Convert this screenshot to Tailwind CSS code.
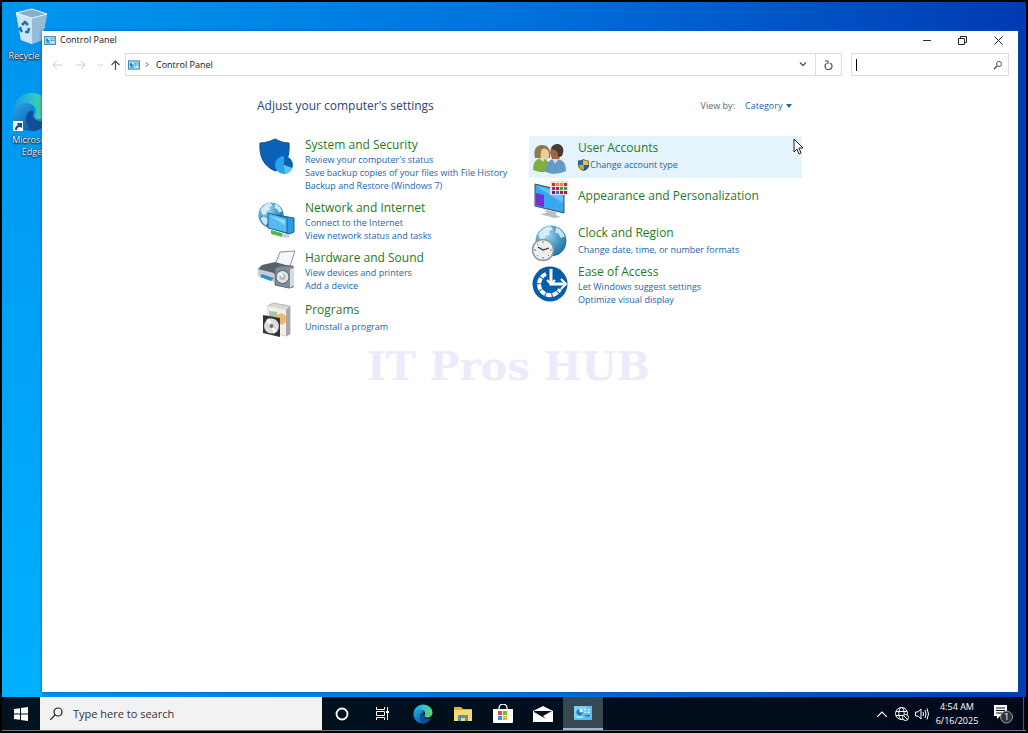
<!DOCTYPE html>
<html lang="en">
<head>
    <meta charset="UTF-8">
    <meta name="viewport" content="width=device-width, initial-scale=1.0">
    <title>Control Panel</title>
    <script src="https://cdn.jsdelivr.net/npm/@tailwindcss/browser@4"></script>
</head>
<body class="h-screen overflow-hidden bg-black px-[2px] pt-[2px] pb-[2px] flex flex-col font-['Open_Sans',sans-serif] text-[9px] text-[#111]">
    <!-- Shared icons -->
    <svg class="absolute w-0 h-0" aria-hidden="true">
        <symbol id="panelIcon" viewBox="0 0 26 20">
            <rect x="1" y="1" width="24" height="18" fill="#9fdcf5" stroke="#3787b0" stroke-width="2"/>
            <circle cx="8" cy="9" r="4" fill="#2378ad"/>
            <path d="M8 9V5a4 4 0 0 1 4 4z" fill="#e9fbff"/>
            <path d="M15 6h3M20 6h3M15 10h3M20 10h3M5 15h8" stroke="#2a83b5" stroke-width="2"/>
            <path d="M17 14h5" stroke="#fff" stroke-width="2"/>
        </symbol>
        <symbol id="panelIconLight" viewBox="0 0 26 20">
            <rect width="26" height="20" fill="#7fd0f5"/>
            <path d="M0 20L20 0h6v20z" fill="#5dbdec"/>
            <circle cx="8" cy="9" r="4.500" fill="#1d79b8"/>
            <path d="M8 9V4a5 5 0 0 1 5 5z" fill="#eafaff"/>
            <path d="M15 5h3M20 5h3M15 9h3M20 9h3M4 16h9" stroke="#e6f8ff" stroke-width="2"/>
            <path d="M16 14h7" stroke="#1d79b8" stroke-width="2"/>
        </symbol>
        <symbol id="edgeIcon" viewBox="0 0 40 40">
            <defs>
                <linearGradient id="edgeTop" x1="0" y1="0.4" x2="1" y2="0.5"><stop offset="0" stop-color="#1b9de2"/><stop offset="0.5" stop-color="#2fc3c9"/><stop offset="1" stop-color="#62d957"/></linearGradient>
                <linearGradient id="edgeBody" x1="0" y1="0" x2="0.6" y2="1"><stop offset="0" stop-color="#2aa7e8"/><stop offset="1" stop-color="#0d5fb5"/></linearGradient>
            </defs>
            <path d="M1 19C2 8 10 1 20 1c11 0 19 8 19 16 0 6-5 10-11 10-4 0-6-2-5-4 3-5 0-11-7-11C9 12 3 15 1 19z" fill="url(#edgeTop)"/>
            <path d="M1 19c2-5 7-8 13-8 5 0 8 3 8 6-5 0-8 4-8 9 0 6 4 11 9 13C10 41 0 31 1 19z" fill="url(#edgeBody)"/>
            <path d="M14 26c0-4 3-8 7-8 1 2 0 4 0 6 1 5 9 7 15 4-3 7-9 11-14 11-5-2-8-7-8-13z" fill="#124d95"/>
        </symbol>
        <symbol id="globe" viewBox="0 0 30 30">
            <defs><radialGradient id="sea" cx="0.35" cy="0.3" r="0.8"><stop offset="0" stop-color="#a9d9ee"/><stop offset="0.5" stop-color="#4d9fc9"/><stop offset="1" stop-color="#1d6795"/></radialGradient></defs>
            <circle cx="15" cy="15" r="14.500" fill="url(#sea)"/>
            <path d="M3 9c3-5 7-7 11-8l3 3-4 2 1 3-4 1-1 4-3 1-2-3zM20 2c5 2 7 6 8 9l-4 1-2-4-3-1zM6 17l5 2 1 4-3 4c-3-2-5-5-6-8z" fill="#e2f3fa" fill-opacity="0.850"/>
        </symbol>
    </svg>

    <!-- Desktop -->
    <main class="relative flex-1 min-h-0 flex flex-col pl-10 pr-2 pt-[29px] pb-[5px] bg-linear-to-r from-[#0098f0] via-[#0072dc] to-[#003ab3]">
        <div class="absolute left-0 top-0 w-10 h-full bg-linear-to-b from-[#0094ee] to-[#00b0ff]"></div>
        <div class="absolute left-0 top-[6px] w-15 flex flex-col gap-[30px] text-center text-white leading-3 [text-shadow:0_1px_2px_#000,0_0_1px_#000]">
            <a href="#" class="flex flex-col items-center gap-1">
                <svg class="w-9 h-[38px]" viewBox="0 0 36 38">
                    <path d="M2 5 18 1l15 5-5 26-10 4L7 32z" fill="#b9d9ec"/>
                    <path d="M2 5l16 4v27L7 32z" fill="#cde5f3"/>
                    <path d="M18 9l15-3-5 26-10 4z" fill="#94bdda"/>
                    <path d="M2 5 18 1l15 5-15 4z" fill="#86aec9" stroke="#eaf6fc"/>
                    <path d="M8 17l3-3 3 3M15 20l-1 4h-3M8 24l-2-3 1-2" fill="none" stroke="#1573c4" stroke-width="2.500"/>
                </svg>
                Recycle Bin
            </a>
            <a href="#" class="relative flex flex-col items-center gap-[2px]">
                <svg class="w-10 h-10"><use href="#edgeIcon"/></svg>
                <svg class="absolute left-[11px] top-[29px] w-[10px] h-[10px] bg-white" viewBox="0 0 10 10"><path d="M2 9c0-3 1-4 3-5L4 2h5v5L7 6C5 6 4 7 4 9z" fill="#1c4a8c"/></svg>
                <span>Microsoft<br>Edge</span>
            </a>
        </div>

        <!-- Window -->
        <section class="relative flex-1 bg-white shadow-[0_0_3px_#0a5bb0]">
            <header class="flex items-center h-[18px] px-[2px]">
                <svg class="w-3 h-[9px] mr-1"><use href="#panelIcon"/></svg>
                <h1 class="flex-1">Control Panel</h1>
                <button aria-label="Minimize" class="w-9 flex justify-center"><svg class="w-[9px] h-[9px]" viewBox="0 0 9 9"><path d="M1 4.500h8" stroke="#333"/></svg></button>
                <button aria-label="Restore" class="w-9 flex justify-center"><svg class="w-[9px] h-[9px]" viewBox="0 0 9 9" fill="none" stroke="#222"><path d="M.5 2.500h6v6h-6zM2.500 2.500v-2h6v6h-2"/></svg></button>
                <button aria-label="Close" class="w-9 flex justify-center"><svg class="w-[9px] h-[9px]" viewBox="0 0 9 9"><path d="M.5.500l8 8M8.500.500l-8 8" stroke="#222"/></svg></button>
            </header>

            <nav class="flex items-center h-[23px] mt-1 pl-2 pr-[9px]">
                <button aria-label="Back" class="w-6"><svg class="w-[10px] h-[10px] ml-[2px]" viewBox="0 0 10 10" fill="none" stroke="#ccc"><path d="M10 5H1M5 1L1 5l4 4"/></svg></button>
                <button aria-label="Forward" class="w-6"><svg class="w-[10px] h-[10px] ml-[2px]" viewBox="0 0 10 10" fill="none" stroke="#ccc"><path d="M0 5h9M5 1l4 4-4 4"/></svg></button>
                <button aria-label="Recent locations" class="w-3"><svg class="w-[5px] h-[4px]" viewBox="0 0 5 4" fill="none" stroke="#ccc"><path d="M0 1l2.500 2L5 1"/></svg></button>
                <button aria-label="Up" class="w-[15px]"><svg class="w-[9px] h-[10px] ml-px" viewBox="0 0 9 10" fill="none" stroke="#555" stroke-width="1.300"><path d="M4.500 10V1M.5 5l4-4 4 4"/></svg></button>
                <div class="flex flex-1 items-center h-full border border-[#ddd] pl-[2px]">
                    <svg class="w-3 h-[10px]"><use href="#panelIcon"/></svg>
                    <svg class="w-1 h-[5px] mx-[5px]" viewBox="0 0 4 5" fill="none" stroke="#444"><path d="M1 .5l2 2-2 2"/></svg>
                    <a href="#" class="flex-1 ml-[2px]">Control Panel</a>
                    <button aria-label="Previous locations" class="w-6 flex justify-center"><svg class="w-2 h-[5px]" viewBox="0 0 8 5" fill="none" stroke="#555" stroke-width="1.300"><path d="M1 .5l3 3 3-3"/></svg></button>
                    <button aria-label="Refresh" class="w-[26px] h-full border-l border-[#ddd] flex items-center justify-center"><svg class="w-[9px] h-[10px]" viewBox="0 0 9 10" fill="none" stroke="#555" stroke-width="1.200"><path d="M6 3a3.500 3.500 0 1 1-3.500.3M1 1h3v3"/></svg></button>
                </div>
                <label class="flex items-center w-[158px] h-full ml-[9px] border border-[#ddd] pl-1 pr-[5px]">
                    <span class="w-px h-3 bg-black"></span>
                    <input type="text" aria-label="Search Control Panel" class="flex-1 min-w-0 outline-none">
                    <svg class="w-[10px] h-[10px]" viewBox="0 0 10 10" fill="none" stroke="#555"><circle cx="6" cy="4" r="2.500"/><path d="M4 6L1 9" stroke-width="1.400"/></svg>
                </label>
            </nav>

            <div class="ml-[215px] w-[545px] pt-5">
                <div class="flex items-center justify-between h-5 pr-[10px]">
                    <h2 class="text-[12px] text-[#2a4475]">Adjust your computer's settings</h2>
                    <div class="flex items-center text-[#666]">
                        <label for="viewBy" class="mr-[10px]">View by:</label>
                        <select id="viewBy" class="appearance-none w-[41px] text-[#1a66a8]"><option>Category</option><option>Large icons</option><option>Small icons</option></select>
                        <svg class="w-[6px] h-[4px]" viewBox="0 0 6 4"><path d="M0 0h6L3 4z" fill="#1a66a8"/></svg>
                    </div>
                </div>

                <div class="flex pt-5 leading-[13px] text-[#1a66a8]">
                    <!-- Left column -->
                    <div class="w-[272px] flex flex-col gap-2 pt-px">
                        <div class="flex gap-[10px]">
                            <svg class="w-[38px] h-10" viewBox="0 0 38 40">
                                <path d="M3 6c6 0 11-2 15-4 4 2 8 4 14 4 1 14-3 23-14 28C7 29 2 20 3 6z" fill="#0b62b8" stroke="#084c96"/>
                                <circle cx="27" cy="28" r="9" fill="#27a4ec"/>
                                <path d="M27 28V19a9 9 0 0 1 8 12z" fill="#0b5fae"/><path d="M27 28l8 3a9 9 0 0 1-7 6z" fill="#5cc3f6"/>
                            </svg>
                            <div class="flex flex-col items-start">
                                <a href="#" class="text-[12px] leading-4 text-[#1e7a1e]">System and Security</a>
                                <a href="#">Review your computer's status</a>
                                <a href="#">Save backup copies of your files with File History</a>
                                <a href="#">Backup and Restore (Windows 7)</a>
                            </div>
                        </div>
                        <div class="flex gap-[10px]">
                            <svg class="w-[38px] h-10" viewBox="0 0 38 40">
                                <use href="#globe" x="1" y="1" width="26" height="28"/>
                                <path d="M20 15l17 3v14l-5 2-12-4z" fill="#2b9be6" stroke="#1a5f93"/>
                                <path d="M11 13l19 5v15l-19-5z" fill="#56b9f3" stroke="#1c648f"/>
                                <path d="M13 16l15 4v5z" fill="#8dd7fb"/>
                                <path d="M14 30l11 3v4l-11-3z" fill="#3fbf4f"/><path d="M25 33l7 2v3l-7-1z" fill="#c7cdd0"/>
                            </svg>
                            <div class="flex flex-col items-start">
                                <a href="#" class="text-[12px] leading-4 text-[#1e7a1e]">Network and Internet</a>
                                <a href="#">Connect to the Internet</a>
                                <a href="#">View network status and tasks</a>
                            </div>
                        </div>
                        <div class="flex gap-[10px]">
                            <svg class="w-[38px] h-10" viewBox="0 0 38 40">
                                <path d="M23 2l15-1-5 15-15-1z" fill="#f4f6f8" stroke="#8d949b"/>
                                <path d="M5 15l13-3 18 5v7H1v-5z" fill="#59616a"/>
                                <path d="M1 19l16 4v9L1 26z" fill="#c5cdd5"/><path d="M5 24l12 4-3 3-11-4z" fill="#2d91cf"/>
                                <path d="M18 18l5-2h13v21l-4 1-14-3z" fill="#838d98" stroke="#5c6670"/>
                                <path d="M33 19l4-1v17l-4 3z" fill="#d5dbe1"/>
                                <circle cx="25.500" cy="27" r="6.500" fill="#dde2e6" stroke="#59636d"/><circle cx="25.500" cy="27" r="3" fill="#b1b9c1"/><path d="M23 23l3 4" stroke="#fff" stroke-width="2"/>
                            </svg>
                            <div class="flex flex-col items-start">
                                <a href="#" class="text-[12px] leading-4 text-[#1e7a1e]">Hardware and Sound</a>
                                <a href="#">View devices and printers</a>
                                <a href="#">Add a device</a>
                            </div>
                        </div>
                        <div class="flex gap-[10px] pt-[2px]">
                            <svg class="w-[38px] h-9" viewBox="0 0 38 36">
                                <path d="M11 4l5-3 17 3v28l-4 2-18-5z" fill="#d9d8d4" stroke="#b7b5af"/>
                                <path d="M11 4l18 4v26l-18-5z" fill="#f0efeb"/><path d="M29 8l4-4v28l-4 2z" fill="#aaa79f"/>
                                <path d="M12 9l8 1v8h-8z" fill="#a9c5a0"/><circle cx="24" cy="17" r="5.500" fill="#f0b568"/>
                                <path d="M6 13l17 3v19L6 31z" fill="#303437"/>
                                <circle cx="14.500" cy="24" r="7.500" fill="#d9dde0"/><path d="M14.500 24L9 18l4-2zM14.500 24l6 5-4 3z" fill="#fff"/><circle cx="14.500" cy="24" r="2" fill="#6e7478"/>
                            </svg>
                            <div class="flex flex-col items-start gap-[2px]">
                                <a href="#" class="text-[12px] leading-4 text-[#1e7a1e]">Programs</a>
                                <a href="#">Uninstall a program</a>
                            </div>
                        </div>
                    </div>

                    <!-- Right column -->
                    <div class="flex-1 flex flex-col">
                        <div class="flex gap-[10px] bg-[#e5f3fd] h-[42px] pl-[2px] pt-1">
                            <svg class="w-[37px] h-9" viewBox="0 0 37 36">
                                <path d="M4 18C2 10 5 5 11 5s9 4 8 13z" fill="#8f7a4c"/>
                                <path d="M11 9c4-1 7 1 7 5s-2 7-5 7-5-6-2-12z" fill="#eccba0"/>
                                <path d="M2 30c0-8 3-11 8-12 6 1 9 4 9 13-6 2-12 1-17-1z" fill="#80ae42"/><path d="M8 18l4 4 2-4z" fill="#d4e7ab"/>
                                <path d="M19 13c0-6 4-8 7-8 4 0 6 4 4 10l-2 4h-7z" fill="#9b6744"/>
                                <path d="M20 9c1-4 4-5 7-5 5 1 7 6 4 12-2 1-3 1-4 0 0-4-1-6-7-7z" fill="#4c3b32"/>
                                <path d="M15 32c0-9 3-13 9-13 8 0 11 4 11 12-6 3-14 4-20 1z" fill="#6699c7"/><path d="M21 19l3 5 4-5z" fill="#c5dced"/>
                            </svg>
                            <div class="flex flex-col items-start gap-[2px]">
                                <a href="#" class="text-[12px] leading-4 text-[#1e7a1e]">User Accounts</a>
                                <a href="#" class="flex items-center gap-[1px]">
                                    <svg class="w-[11px] h-3" viewBox="0 0 12 13"><path d="M0 2q4 0 6-2v6.500H0z" fill="#256eb1"/><path d="M12 2Q8 2 6 0v6.500h6z" fill="#edc03d"/><path d="M0 6.500h6V13Q0 11 0 6.500z" fill="#d9aa2f"/><path d="M12 6.500H6V13q6-2 6-6.500z" fill="#255f9c"/><path d="M.5 2Q4 2 6 .5q2 1.500 5.500 1.500v4Q11 11 6 12.500 1 11 .5 6z" fill="none" stroke="#2a3b46" stroke-width=".7"/></svg>
                                    Change account type
                                </a>
                            </div>
                        </div>
                        <div class="flex gap-[10px] pl-[2px] pt-[2px]">
                            <svg class="w-[37px] h-10" viewBox="0 0 37 40">
                                <path d="M15 30l10 2v3l5 2-7 1-14-4 6-1z" fill="#b8bec3"/>
                                <path d="M4 4l29 7v22L4 26z" fill="#37a7f1" stroke="#394c59"/>
                                <path d="M5 6l27 7v10z" fill="#62c4fb"/><path d="M5 13l8 2v12l-8-2z" fill="#7131d2"/>
                                <path d="M19 1h18v14H19z" fill="#f3ddd5"/>
                                <path d="M21 3h3v3h-3zM33 3h3v3h-3z" fill="#c42842"/><path d="M25 3h3v3h-3zM29 3h3v3h-3z" fill="#ec8b22"/>
                                <path d="M21 7h3v3h-3z" fill="#8229a7"/><path d="M25 7h3v3h-3z" fill="#ad1f63"/><path d="M29 7h3v3h-3zM33 7h3v3h-3z" fill="#3f9f45"/>
                                <path d="M21 11h3v3h-3z" fill="#3427a0"/><path d="M25 11h3v3h-3z" fill="#2f72c7"/><path d="M29 11h3v3h-3zM33 11h3v3h-3z" fill="#a3203c"/>
                            </svg>
                            <a href="#" class="pt-2 text-[12px] leading-4 text-[#1e7a1e]">Appearance and Personalization</a>
                        </div>
                        <div class="flex gap-[10px] pl-[2px] pt-1">
                            <svg class="w-[37px] h-10" viewBox="0 0 37 40">
                                <use href="#globe" x="4" y="0" width="32" height="34"/>
                                <circle cx="12" cy="26" r="10.500" fill="#eceeef" stroke="#8e979e" stroke-width="1.500"/>
                                <path d="M7 23l5 3 6-2" fill="none" stroke="#333" stroke-width="1.200"/>
                                <path d="M12 17v2M12 33v2M3 26h2M19 26h2M6 20l1 1M18 32l-1-1M6 32l1-1" stroke="#777"/>
                            </svg>
                            <div class="flex flex-col items-start gap-[2px] pt-px">
                                <a href="#" class="text-[12px] leading-4 text-[#1e7a1e]">Clock and Region</a>
                                <a href="#">Change date, time, or number formats</a>
                            </div>
                        </div>
                        <div class="flex gap-[10px] pl-[2px]">
                            <svg class="w-[37px] h-10" viewBox="0 0 37 40">
                                <circle cx="19" cy="20" r="17.500" fill="#085da8"/>
                                <path d="M15 10A11 11 0 1 0 29 25" fill="none" stroke="#fff" stroke-width="4" stroke-dasharray="5.500 1"/>
                                <path d="M20 5v15h13" fill="none" stroke="#fff" stroke-width="3"/>
                                <path d="M16 16l4 4 4-4M30 15l5 5-5 5" fill="none" stroke="#fff" stroke-width="2"/>
                            </svg>
                            <div class="flex flex-col items-start">
                                <a href="#" class="text-[12px] leading-4 text-[#1e7a1e]">Ease of Access</a>
                                <a href="#">Let Windows suggest settings</a>
                                <a href="#">Optimize visual display</a>
                            </div>
                        </div>
                    </div>
                </div>
            </div>

            <p class="mt-2 pl-[325px] font-['DejaVu_Serif',serif] font-bold text-[40px] leading-10 text-[#ebebfb]">IT Pros HUB</p>

            <!-- Mouse pointer -->
            <svg class="absolute left-[751px] top-[107px] w-[11px] h-[17px]" viewBox="0 0 11 17"><path d="M1 1v13l3-3 2 5 2-1-2-5h4z" fill="#fff" stroke="#222"/></svg>
        </section>
    </main>

    <!-- Taskbar -->
    <footer class="flex items-stretch h-[34px] bg-linear-to-r from-[#00131f] to-[#020a1a] border-b border-[#777] text-white">
        <button aria-label="Start" class="w-[38px] flex items-center justify-center">
            <svg class="w-[14px] h-[14px]" viewBox="0 0 14 14" fill="#fff"><path d="M0 2l6-.8v5.300H0zM7 1l7-1v6.500H7zM0 7.500h6v5.300L0 12zM7 7.500h7V14l-7-1z"/></svg>
        </button>
        <label class="w-[282px] flex items-center bg-[#f2f2f2] pl-[10px]">
            <svg class="w-[13px] h-[13px] mr-[10px]" viewBox="0 0 13 13" fill="none" stroke="#222" stroke-width="1.200"><circle cx="8" cy="5" r="4"/><path d="M5 8l-5 5"/></svg>
            <input type="text" aria-label="Search" placeholder="Type here to search" class="flex-1 min-w-0 pt-px text-[11px] outline-none placeholder:text-[#333]">
        </label>
        <button aria-label="Cortana" class="w-10 flex items-center justify-center"><svg class="w-[14px] h-[14px]" viewBox="0 0 14 14"><circle cx="7" cy="7" r="5.500" fill="none" stroke="#fff" stroke-width="1.800"/></svg></button>
        <button aria-label="Task View" class="w-10 flex items-center justify-center"><svg class="w-[15px] h-[13px]" viewBox="0 0 15 13" fill="none" stroke="#fff"><path d="M1.500 0v2.500h8V0M1.500 4.500h8v4h-8zM1.500 13v-2.500h8V13M12.500 0v13"/><path d="M11 4h3v2h-3z" fill="#fff" stroke="none"/></svg></button>
        <button aria-label="Microsoft Edge" class="w-[41px] flex items-center justify-center"><svg class="w-5 h-5"><use href="#edgeIcon"/></svg></button>
        <button aria-label="File Explorer" class="w-10 flex items-center justify-center"><svg class="w-[18px] h-4" viewBox="0 0 18 16"><path d="M0 1h7l2 2h9v12H0z" fill="#e9ae36"/><path d="M0 4h18v11H0z" fill="#fbd972"/><path d="M4 15V9h10v6h-3v-3H7v3z" fill="#4d96b5"/></svg></button>
        <button aria-label="Microsoft Store" class="w-10 flex items-center justify-center"><svg class="w-5 h-5" viewBox="0 0 20 20"><path d="M6 6V4a4 4 0 0 1 8 0v2" fill="none" stroke="#fff" stroke-width="1.300"/><path d="M0 5h20v13q0 1-1 1H1q-1 0-1-1z" fill="#fff"/><path d="M5 7h4v4H5z" fill="#df5232"/><path d="M10 7h4v4h-4z" fill="#7cb52d"/><path d="M5 12h4v4H5z" fill="#2c9bdc"/><path d="M10 12h4v4h-4z" fill="#f1b62e"/></svg></button>
        <button aria-label="Mail" class="w-10 flex items-center justify-center"><svg class="w-5 h-4" viewBox="0 0 20 16"><path d="M0 5l10-5 10 5v11H0z" fill="#fff"/><path d="M1 5h18l-9 5 3 3L1 6z" fill="#04131f"/></svg></button>
        <button aria-label="Control Panel" class="w-10 flex items-center justify-center bg-[#394751] border-b-2 border-[#8bbbe2]"><svg class="w-[18px] h-[14px]"><use href="#panelIconLight"/></svg></button>

        <!-- Tray -->
        <div class="flex flex-1 items-center justify-end">
            <button aria-label="Show hidden icons" class="mr-2"><svg class="w-[10px] h-[6px]" viewBox="0 0 10 6" fill="none" stroke="#fff" stroke-width="1.200"><path d="M0 6l5-5 5 5"/></svg></button>
            <button aria-label="Network" class="mr-[6px]"><svg class="w-[14px] h-[14px]" viewBox="0 0 14 14" fill="none" stroke="#fff"><circle cx="6.500" cy="6.500" r="6"/><ellipse cx="6.500" cy="6.500" rx="2.700" ry="6"/><path d="M1 4.500h11M1 8.500h11"/><circle cx="10.500" cy="10.500" r="3" fill="#030b19"/><path d="M8.500 8.500l4 4"/></svg></button>
            <button aria-label="Volume" class="mr-[6px]"><svg class="w-[14px] h-3" viewBox="0 0 14 12" fill="none" stroke="#fff"><path d="M.5 4H3l3-3v10L3 8H.5zM8 4q1 2 0 4M10 2q2 4 0 8M12 0.500q3 5.500 0 11"/></svg></button>
            <time class="w-[44px] text-center leading-[14px] whitespace-nowrap">4:54 AM<br>6/16/2025</time>
            <button aria-label="Notifications" class="relative ml-[14px] mr-[10px]">
                <svg class="w-5 h-5" viewBox="0 0 20 20"><path d="M1 1h13v11H7l-3 3v-3H1z" fill="#fff"/><path d="M3 4h9M3 6.500h9M3 9h6" stroke="#04101c"/><circle cx="13.500" cy="13" r="6" fill="#333" stroke="#999"/></svg>
                <span class="absolute left-[11px] top-[7px] leading-3">1</span>
            </button>
            <span class="w-[3px] self-stretch border-l border-[#555]"></span>
        </div>
    </footer>
</body>
</html>
